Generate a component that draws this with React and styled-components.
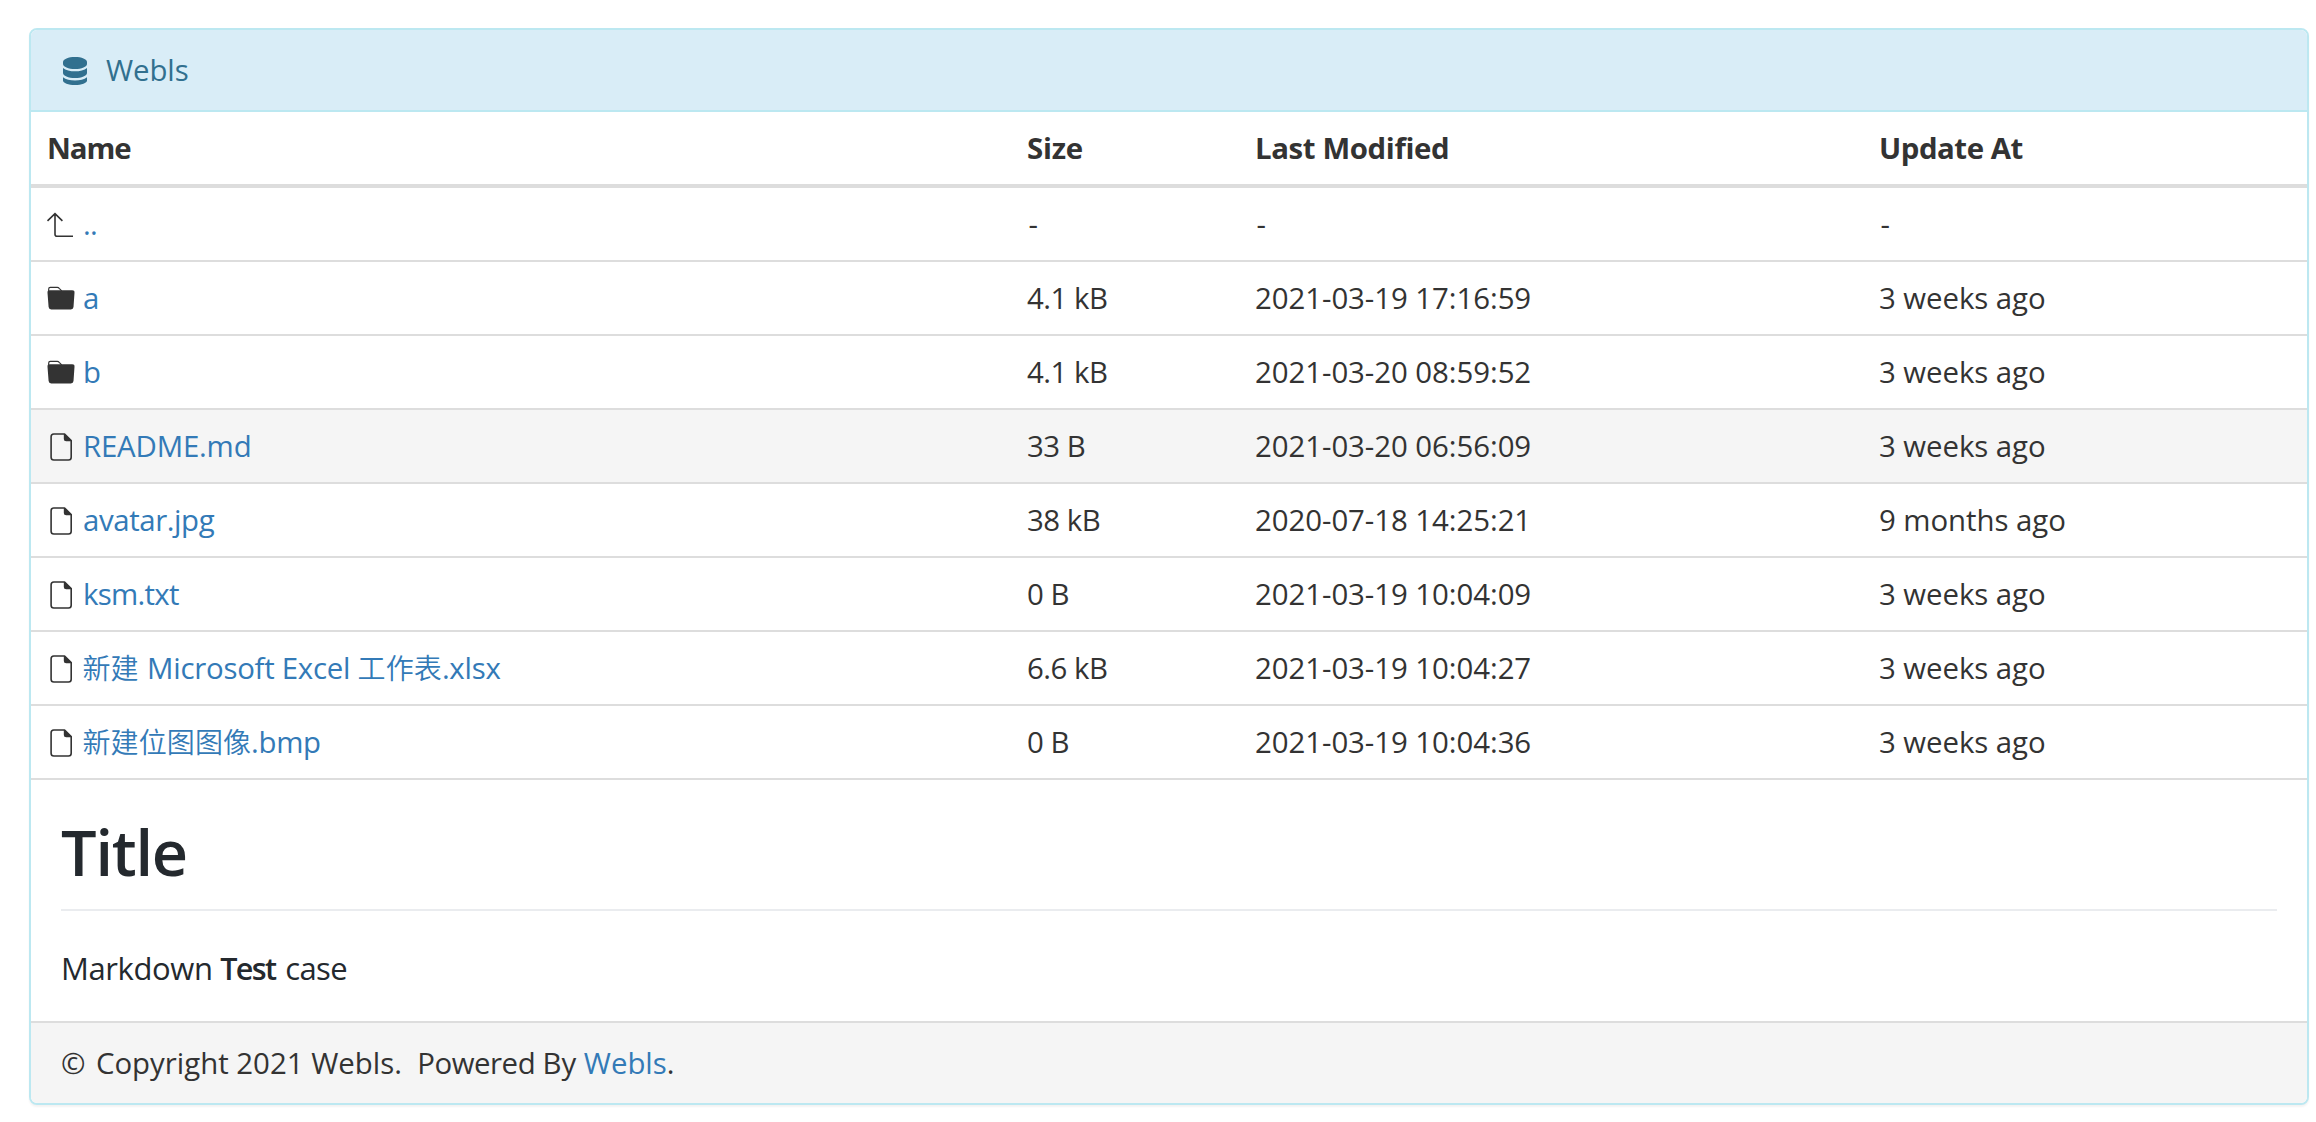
import React from "react";
import styled, { createGlobalStyle } from "styled-components";

const GlobalStyle = createGlobalStyle`
  *, *::before, *::after { box-sizing: border-box; }
  body {
    margin: 0;
    background: #fff;
    color: #333;
    font-family: "Open Sans", "Noto Sans", "Noto Sans CJK SC", sans-serif;
    font-size: 29.4px;
    line-height: 42px;
  }
`;

const Page = styled.main`
  padding: 28px 7px 15px 29px;
`;

const Panel = styled.section`
  border: 2px solid #bce8f1;
  border-radius: 8px;
  background: #fff;
  box-shadow: 0 2px 2px rgba(0, 0, 0, 0.05);
  overflow: hidden;
`;

const PanelHeading = styled.header`
  display: flex;
  align-items: center;
  gap: 19px;
  height: 82px;
  padding: 0 32px;
  border-bottom: 2px solid #bce8f1;
  background: #d9edf7;
  color: #31708f;
`;

const Table = styled.table`
  width: 100%;
  table-layout: fixed;
  border-collapse: separate;
  border-spacing: 0;
`;

const Col = styled.col`
  width: ${(p) => p.$width};
`;

const HeadCell = styled.th`
  height: 76px;
  padding: 0 16px;
  border-bottom: 4px solid #ddd;
  text-align: left;
  font-weight: 700;
`;

const Row = styled.tr`
  background: ${(p) => (p.$active ? "#f5f5f5" : "transparent")};
`;

const Cell = styled.td`
  height: 74px;
  padding: 0 16px ${(p) => (p.$blank ? "0 17.500px" : "")};
  border-bottom: 2px solid #ddd;
  white-space: nowrap;
`;

const Entry = styled.div`
  display: flex;
  align-items: center;
  gap: 8px;
`;

const Icon = styled.svg`
  flex: none;
  display: block;
  width: ${(p) => p.$width || 28}px;
  height: 28px;
  margin-top: ${(p) => p.$drop || 0}px;
  overflow: visible;
`;

const Link = styled.a`
  color: #337ab7;
  text-decoration: none;
`;

const Text = styled.span`
  letter-spacing: ${(p) => p.$track || 0}px;
`;

const Han = styled.span`
  font-family: "Noto Sans CJK SC", sans-serif;
  font-size: 28px;
  font-weight: 350;
  line-height: 1;
  letter-spacing: 0.1px;
  margin-left: ${(p) => p.$left || 0}px;
  margin-right: ${(p) => p.$right || 0}px;
`;

const Readme = styled.article`
  height: 241px;
  padding: 30px 30px 0;
  color: #24292e;
`;

const Title = styled.h1`
  height: 101px;
  margin: 0 0 33px;
  border-bottom: 2px solid #eaecef;
  font-size: 63px;
  font-weight: 600;
  line-height: 84px;
  letter-spacing: -1.2px;
`;

const Paragraph = styled.p`
  margin: 0;
  font-size: 31px;
  line-height: 48px;
`;

const Strong = styled.strong`
  font-size: 30.5px;
  font-weight: 600;
  letter-spacing: -1.6px;
  margin-right: 2.2px;
`;

const PanelFooter = styled.footer`
  display: flex;
  align-items: center;
  height: 82px;
  padding: 0 30px;
  border-top: 2px solid #ddd;
  background: #f5f5f5;
  white-space: pre;
`;

const DatabaseIcon = () => (
  <Icon $width={24} $drop={2} viewBox="0 0 24 28" fill="currentColor">
    <path d="M24 5v2c0 2.900-5.400 5-12 5S0 9.900 0 7V5c0-2.900 5.400-5 12-5s12 2.100 12 5z" />
    <path d="M24 10.900V16c0 2.900-5.400 5-12 5S0 18.900 0 16v-5.100c2.600 2.400 7.300 3.400 12 3.400s9.400-1 12-3.400z" />
    <path d="M24 20.300V23.500c0 2.600-5.400 4.500-12 4.500S0 26.100 0 23.500v-3.200c2.600 2.400 7.300 3.300 12 3.300s9.400-.9 12-3.300z" />
  </Icon>
);

const UpIcon = () => (
  <Icon viewBox="0 0 28 28" fill="none" stroke="#333" strokeWidth="1.600">
    <path d="M.5 10.900 8 3.600l7.400 7.300M8 3.600v20.600q0 2 2 2h16" />
  </Icon>
);

const FolderIcon = () => (
  <Icon viewBox="0 0 28 28">
    <path
      d="M1.700 8V5q0-1.600 1.600-1.600h7q1.100 0 1.900.9l2.500 2.500"
      fill="none"
      stroke="#333"
      strokeWidth="1.200"
    />
    <path
      d="M2.800 6.300h22.400q2.500 0 2.300 2.400l-1 14.300q-.2 2.400-2.600 2.400H4.200q-2.400 0-2.600-2.400L.5 8.700q-.2-2.400 2.300-2.400z"
      fill="#333"
    />
  </Icon>
);

const FileIcon = () => (
  <Icon viewBox="0 0 28 28">
    <path
      d="M6.800 2h10.800l6.600 6.500v16.800q0 2.700-2.700 2.700H6.800q-2.700 0-2.700-2.700V4.700q0-2.700 2.700-2.700z"
      fill="none"
      stroke="#333"
      strokeWidth="1.600"
      strokeLinejoin="round"
    />
    <path d="M16.800 2h1l6.900 6.800v.5h-5.500q-2.400 0-2.400-2.400z" fill="#333" />
  </Icon>
);

const icons = { up: UpIcon, folder: FolderIcon, file: FileIcon };

const headings = [
  ["Name", -1.1],
  ["Size", -0.23],
  ["Last Modified", -0.38],
  ["Update At", -0.45],
];

const entries = [
  { icon: "up", name: "..", track: -0.7, size: "-", modified: "-", updated: "-", blank: true },
  { icon: "folder", name: "a", size: "4.1 kB", modified: "2021-03-19 17:16:59", updated: "3 weeks ago" },
  { icon: "folder", name: "b", size: "4.1 kB", modified: "2021-03-20 08:59:52", updated: "3 weeks ago" },
  { icon: "file", name: "README.md", track: -0.18, size: "33 B", modified: "2021-03-20 06:56:09", updated: "3 weeks ago", active: true },
  { icon: "file", name: "avatar.jpg", track: -0.4, size: "38 kB", modified: "2020-07-18 14:25:21", updated: "9 months ago" },
  { icon: "file", name: "ksm.txt", track: -0.7, size: "0 B", modified: "2021-03-19 10:04:09", updated: "3 weeks ago" },
  {
    icon: "file",
    name: (
      <>
        <Han $left={-0.5} $right={1}>新建</Han> Microsoft Excel <Han>工作表</Han>.xlsx
      </>
    ),
    track: -0.26,
    size: "6.6 kB",
    modified: "2021-03-19 10:04:27",
    updated: "3 weeks ago",
  },
  {
    icon: "file",
    name: (
      <>
        <Han $left={-0.5}>新建位图图像</Han>.bmp
      </>
    ),
    track: -0.3,
    size: "0 B",
    modified: "2021-03-19 10:04:36",
    updated: "3 weeks ago",
  },
];

function FileRow({ entry }) {
  const EntryIcon = icons[entry.icon];
  return (
    <Row $active={entry.active}>
      <Cell>
        <Entry>
          <EntryIcon />
          <Link>
            <Text $track={entry.track}>{entry.name}</Text>
          </Link>
        </Entry>
      </Cell>
      <Cell $blank={entry.blank}>
        <Text $track={-0.5}>{entry.size}</Text>
      </Cell>
      <Cell $blank={entry.blank}>
        <Text $track={-0.06}>{entry.modified}</Text>
      </Cell>
      <Cell $blank={entry.blank}>
        <Text $track={-0.06}>{entry.updated}</Text>
      </Cell>
    </Row>
  );
}

export default function App() {
  return (
    <>
      <GlobalStyle />
      <Page>
        <Panel>
          <PanelHeading>
            <DatabaseIcon />
            <Text $track={-0.1}>Webls</Text>
          </PanelHeading>
          <Table>
            <colgroup>
              <Col $width="980px" />
              <Col $width="228px" />
              <Col $width="624px" />
              <Col $width="auto" />
            </colgroup>
            <thead>
              <tr>
                {headings.map(([label, track]) => (
                  <HeadCell key={label}>
                    <Text $track={track}>{label}</Text>
                  </HeadCell>
                ))}
              </tr>
            </thead>
            <tbody>
              {entries.map((entry, i) => (
                <FileRow key={i} entry={entry} />
              ))}
            </tbody>
          </Table>
          <Readme>
            <Title>Title</Title>
            <Paragraph>
              <Text $track={-0.4}>Markdown </Text>
              <Strong>Test</Strong>
              <Text $track={-0.6}> case</Text>
            </Paragraph>
          </Readme>
          <PanelFooter>
            <Text $track={1.4}>{"© "}</Text>
            <Text>{"Copyright 2021 Webls. \u00a0"}</Text>
            <Text $track={-0.45}>{"Powered "}</Text>
            <Text>{"By "}</Text>
            <Link>Webls</Link>
            <Text>.</Text>
          </PanelFooter>
        </Panel>
      </Page>
    </>
  );
}
